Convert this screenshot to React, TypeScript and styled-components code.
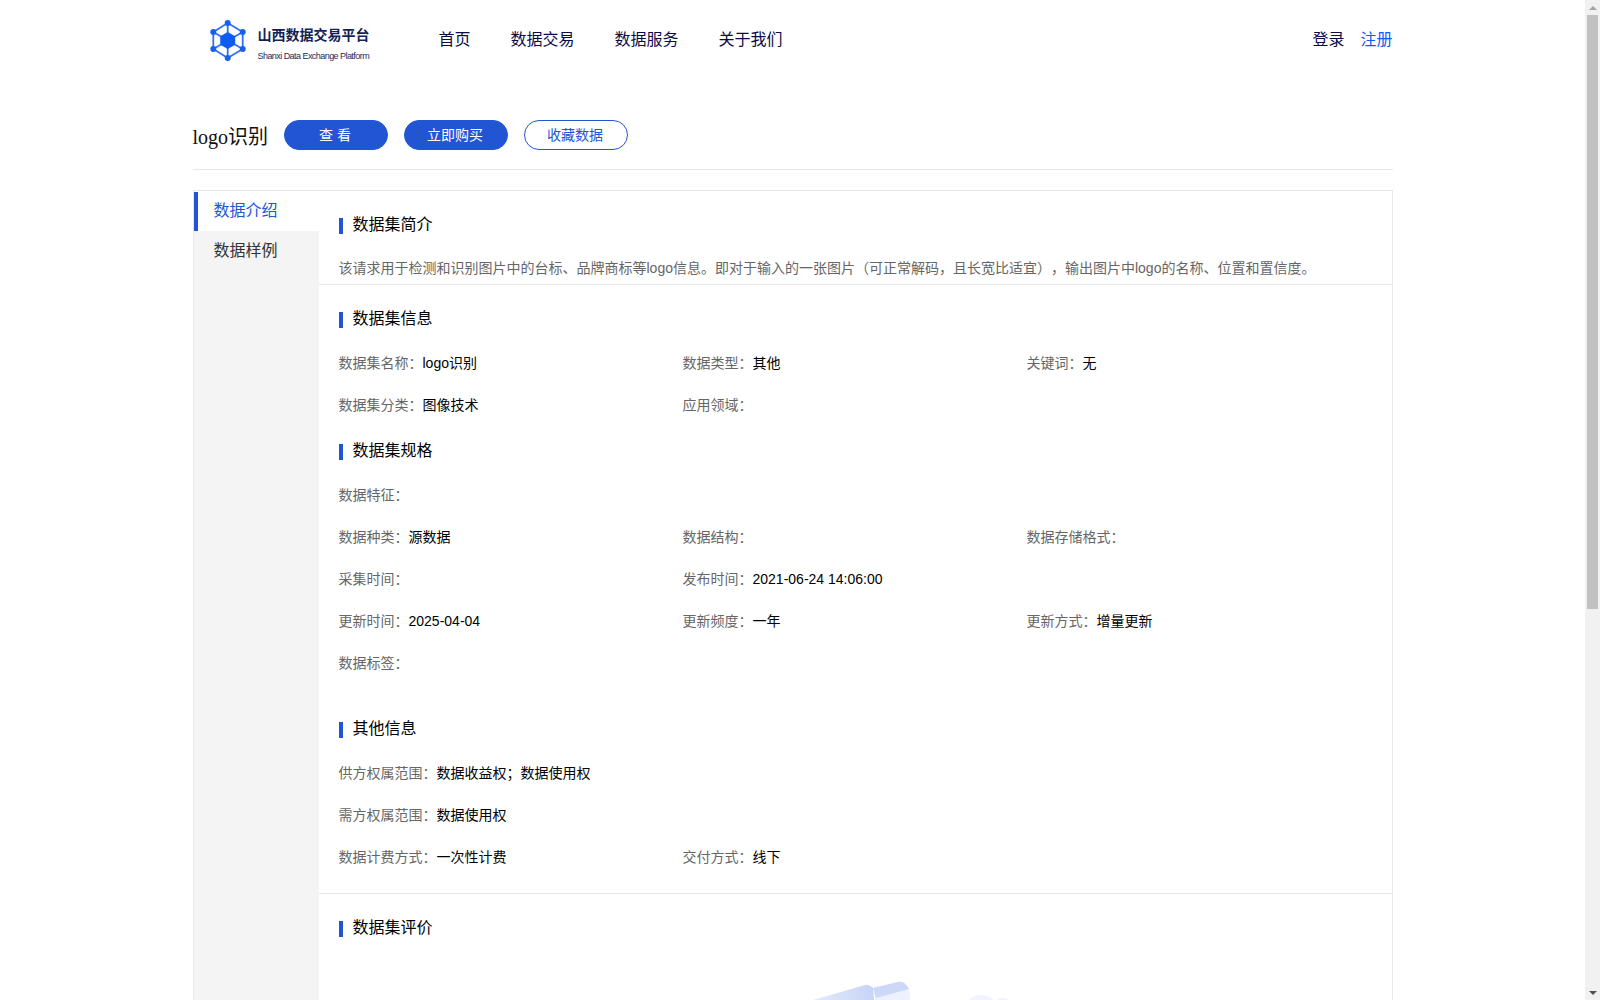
import React from "react";
import styled, { createGlobalStyle } from "styled-components";

const blue = "#2255d4";
const fontStack = `"Liberation Sans", "Noto Sans CJK SC", sans-serif`;

const GlobalStyle = createGlobalStyle`
  html, body {
    height: 100%;
  }
  body {
    margin: 0;
    background: #fff;
    font-family: ${fontStack};
    font-size: 14px;
    color: #000;
    text-spacing-trim: space-all;
  }
`;

interface Field {
  label: string;
  value?: string;
}

const infoRows: Field[][] = [
  [
    { label: "数据集名称：", value: "logo识别" },
    { label: "数据类型：", value: "其他" },
    { label: "关键词：", value: "无" },
  ],
  [{ label: "数据集分类：", value: "图像技术" }, { label: "应用领域：" }],
];

const specRows: Field[][] = [
  [{ label: "数据特征：" }],
  [
    { label: "数据种类：", value: "源数据" },
    { label: "数据结构：" },
    { label: "数据存储格式：" },
  ],
  [{ label: "采集时间：" }, { label: "发布时间：", value: "2021-06-24 14:06:00" }],
  [
    { label: "更新时间：", value: "2025-04-04" },
    { label: "更新频度：", value: "一年" },
    { label: "更新方式：", value: "增量更新" },
  ],
  [{ label: "数据标签：" }],
];

const otherRows: Field[][] = [
  [{ label: "供方权属范围：", value: "数据收益权；数据使用权" }],
  [{ label: "需方权属范围：", value: "数据使用权" }],
  [
    { label: "数据计费方式：", value: "一次性计费" },
    { label: "交付方式：", value: "线下" },
  ],
];

function Logo() {
  return (
    <LogoWrap>
      <svg width="38" height="42" viewBox="0 0 38 42">
        <g stroke="#2f72f5" strokeWidth="1.8" fill="none">
          <path d="M17.7 4 L32.7 13 L32.7 30 L17.7 39 L3.3 30 L3.3 13 Z" />
          <path d="M17.7 4 V39 M3.3 13 L32.7 30 M32.7 13 L3.3 30" />
        </g>
        <path d="M17.7 13 L25.2 17.3 L25.2 25.7 L17.7 30 L10.2 25.7 L10.2 17.3 Z" fill="#0f5cf5" />
        <g fill="#1560f0">
          <circle cx="17.7" cy="4" r="3" />
          <circle cx="32.7" cy="13" r="3" />
          <circle cx="32.7" cy="30" r="3" />
          <circle cx="17.7" cy="39" r="3" />
          <circle cx="3.3" cy="30" r="3" />
          <circle cx="3.3" cy="13" r="3" />
        </g>
      </svg>
      <LogoText>
        <LogoTitle>山西数据交易平台</LogoTitle>
        <LogoSub>Shanxi Data Exchange Platform</LogoSub>
      </LogoText>
    </LogoWrap>
  );
}

function Rows({ rows }: { rows: Field[][] }) {
  return (
    <>
      {rows.map((row, i) => (
        <Row key={i}>
          {row.map((f) => (
            <Cell key={f.label}>
              <Label>{f.label}</Label>
              {f.value}
            </Cell>
          ))}
        </Row>
      ))}
    </>
  );
}

export default function App() {
  return (
    <Shell>
      <GlobalStyle />
      <Viewport>
        <Page>
          <Header>
            <Logo />
            <Nav>
              <NavLink>首页</NavLink>
              <NavLink>数据交易</NavLink>
              <NavLink>数据服务</NavLink>
              <NavLink>关于我们</NavLink>
            </Nav>
            <Auth>
              <NavLink>登录</NavLink>
              <NavLink $accent>注册</NavLink>
            </Auth>
          </Header>

          <TitleBar>
            <Title>logo识别</Title>
            <PillButton>查 看</PillButton>
            <PillButton>立即购买</PillButton>
            <PillButton $outline>收藏数据</PillButton>
          </TitleBar>

          <Card>
            <Side>
              <SideItem $active>数据介绍</SideItem>
              <SideItem>数据样例</SideItem>
            </Side>
            <Main>
              <IntroSection>
                <Heading>数据集简介</Heading>
                <Intro>
                  该请求用于检测和识别图片中的台标、品牌商标等logo信息。即对于输入的一张图片（可正常解码，且长宽比适宜），输出图片中logo的名称、位置和置信度。
                </Intro>
              </IntroSection>
              <InfoSection>
                <Heading>数据集信息</Heading>
                <Rows rows={infoRows} />
                <Heading>数据集规格</Heading>
                <Rows rows={specRows} />
                <OtherHeading>其他信息</OtherHeading>
                <Rows rows={otherRows} />
              </InfoSection>
              <ReviewSection>
                <Heading>数据集评价</Heading>
                <Illustration>
                  <svg width="400" height="200" viewBox="0 0 400 200">
                    <defs>
                      <linearGradient id="tube" x1="0" y1="0" x2="1" y2="0">
                        <stop offset="0" stopColor="#f6f8fe" />
                        <stop offset="1" stopColor="#c6d3f6" />
                      </linearGradient>
                    </defs>
                    <path d="M120 60 L210 34 Q214 33 218 37 L220 60 L220 120 L120 120 Z" fill="url(#tube)" />
                    <path d="M218 37 L243 31 Q248 30 251 34 Q255 38 255 43 L255 120 L220 120 L220 47 Z" fill="#edf1fd" />
                    <path d="M218 37 L243 31 Q248 30 251 34 Q253 36 254 38 L221 47 Z" fill="#ccd8f8" />
                    <ellipse cx="326" cy="60" rx="17" ry="16" fill="#f1f4fe" />
                    <ellipse cx="348" cy="62" rx="12" ry="15" fill="#f1f4fe" />
                  </svg>
                </Illustration>
              </ReviewSection>
            </Main>
          </Card>
        </Page>
      </Viewport>
      <ScrollBar>
        <ScrollArrow $up />
        <ScrollTrack>
          <ScrollThumb />
        </ScrollTrack>
        <ScrollArrow />
      </ScrollBar>
    </Shell>
  );
}

const Shell = styled.div`
  display: flex;
  height: 100vh;
  overflow: hidden;
`;

const Viewport = styled.div`
  flex: 1;
  min-width: 0;
  overflow: hidden;
`;

const ScrollBar = styled.div`
  flex: 0 0 15px;
  display: flex;
  flex-direction: column;
  background: #f1f1f1;
`;

const ScrollArrow = styled.div<{ $up?: boolean }>`
  flex: 0 0 15px;
  display: flex;
  align-items: center;
  justify-content: center;

  &::after {
    content: "";
    width: 0;
    height: 0;
    border-left: 4px solid transparent;
    border-right: 4px solid transparent;
    ${(p) =>
      p.$up ? "border-bottom: 4px solid #a3a3a3;" : "border-top: 4px solid #505050;"}
  }
`;

const ScrollTrack = styled.div`
  flex: 1;
  padding: 0 2px;
`;

const ScrollThumb = styled.div`
  height: 594px;
  background: #c1c1c1;
`;

const Page = styled.div`
  width: 1200px;
  height: 1630px;
  margin: 0 auto;
`;

const Header = styled.header`
  display: flex;
  align-items: center;
  height: 78px;
  padding-top: 2px;
  box-sizing: border-box;
`;

const LogoWrap = styled.div`
  display: flex;
  align-items: center;
  width: 246px;
  padding-left: 17px;
  gap: 10px;
  box-sizing: border-box;
`;

const LogoText = styled.div`
  display: flex;
  flex-direction: column;
  gap: 7px;
  padding-top: 6px;
  white-space: nowrap;
`;

const LogoTitle = styled.div`
  font-size: 14px;
  line-height: 18px;
  font-weight: 700;
  color: #141f55;
`;

const LogoSub = styled.div`
  font-size: 9px;
  line-height: 10px;
  letter-spacing: -0.55px;
  color: #1f2a5c;
`;

const Nav = styled.nav`
  display: flex;
  gap: 40px;
`;

const Auth = styled.div`
  display: flex;
  gap: 16px;
  margin-left: auto;
`;

const NavLink = styled.a<{ $accent?: boolean }>`
  font-size: 16px;
  line-height: 22px;
  color: ${(p) => (p.$accent ? "#0f5cf5" : "#0b0b45")};
  cursor: pointer;
`;

const TitleBar = styled.div`
  display: flex;
  align-items: center;
  gap: 16px;
  padding: 42px 0 19px;
  margin-bottom: 20px;
  border-bottom: 1px solid #e8e8e8;
`;

const Title = styled.h1`
  flex: 0 0 75px;
  margin: 0;
  font-family: "Liberation Serif", "Noto Sans CJK SC", serif;
  font-size: 20px;
  font-weight: 400;
  white-space: nowrap;
  color: #111;
`;

const PillButton = styled.button<{ $outline?: boolean }>`
  width: 104px;
  height: 30px;
  padding: 0 2px 2px 0;
  border-radius: 15px;
  border: 1px solid ${blue};
  background: ${(p) => (p.$outline ? "#fff" : blue)};
  color: ${(p) => (p.$outline ? blue : "#fff")};
  font-family: ${fontStack};
  font-size: 14px;
  cursor: pointer;
`;

const Card = styled.div`
  display: flex;
  border: 1px solid #e8e8e8;
  box-sizing: border-box;
`;

const Side = styled.aside`
  flex: 0 0 125px;
  padding-top: 1px;
  background: linear-gradient(#fff 40px, #f4f4f4 40px);
`;

const SideItem = styled.div<{ $active?: boolean }>`
  height: ${(p) => (p.$active ? 39 : 40)}px;
  line-height: ${(p) => (p.$active ? 38 : 40)}px;
  padding-left: 16px;
  font-size: 16px;
  color: ${(p) => (p.$active ? blue : "#333")};
  border-left: 4px solid ${(p) => (p.$active ? blue : "transparent")};
`;

const Main = styled.main`
  flex: 1;
  min-width: 0;
`;

const IntroSection = styled.section`
  padding: 9px 20px 0;
  border-bottom: 1px solid #e8e8e8;
`;

const InfoSection = styled.section`
  padding: 9px 20px 15px;
  border-bottom: 1px solid #e8e8e8;
`;

const ReviewSection = styled.section`
  padding: 9px 20px 0;
`;

const Heading = styled.h3`
  position: relative;
  margin: 0;
  height: 48px;
  line-height: 50px;
  padding-left: 14px;
  font-size: 16px;
  font-weight: 400;
  color: #000;

  &::before {
    content: "";
    position: absolute;
    left: 0;
    top: 18px;
    width: 4px;
    height: 16px;
    background: ${blue};
  }
`;

const OtherHeading = styled(Heading)`
  margin-top: 20px;
`;

const Intro = styled.p`
  margin: 4px 0 0;
  line-height: 32px;
  color: #666;
  white-space: nowrap;
`;

const Row = styled.div`
  display: grid;
  grid-template-columns: repeat(3, 344px);
  height: 42px;
  line-height: 42px;
`;

const Cell = styled.div`
  color: #000;
  white-space: nowrap;
`;

const Label = styled.span`
  color: #666;
`;

const Illustration = styled.div`
  display: flex;
  justify-content: center;
`;
